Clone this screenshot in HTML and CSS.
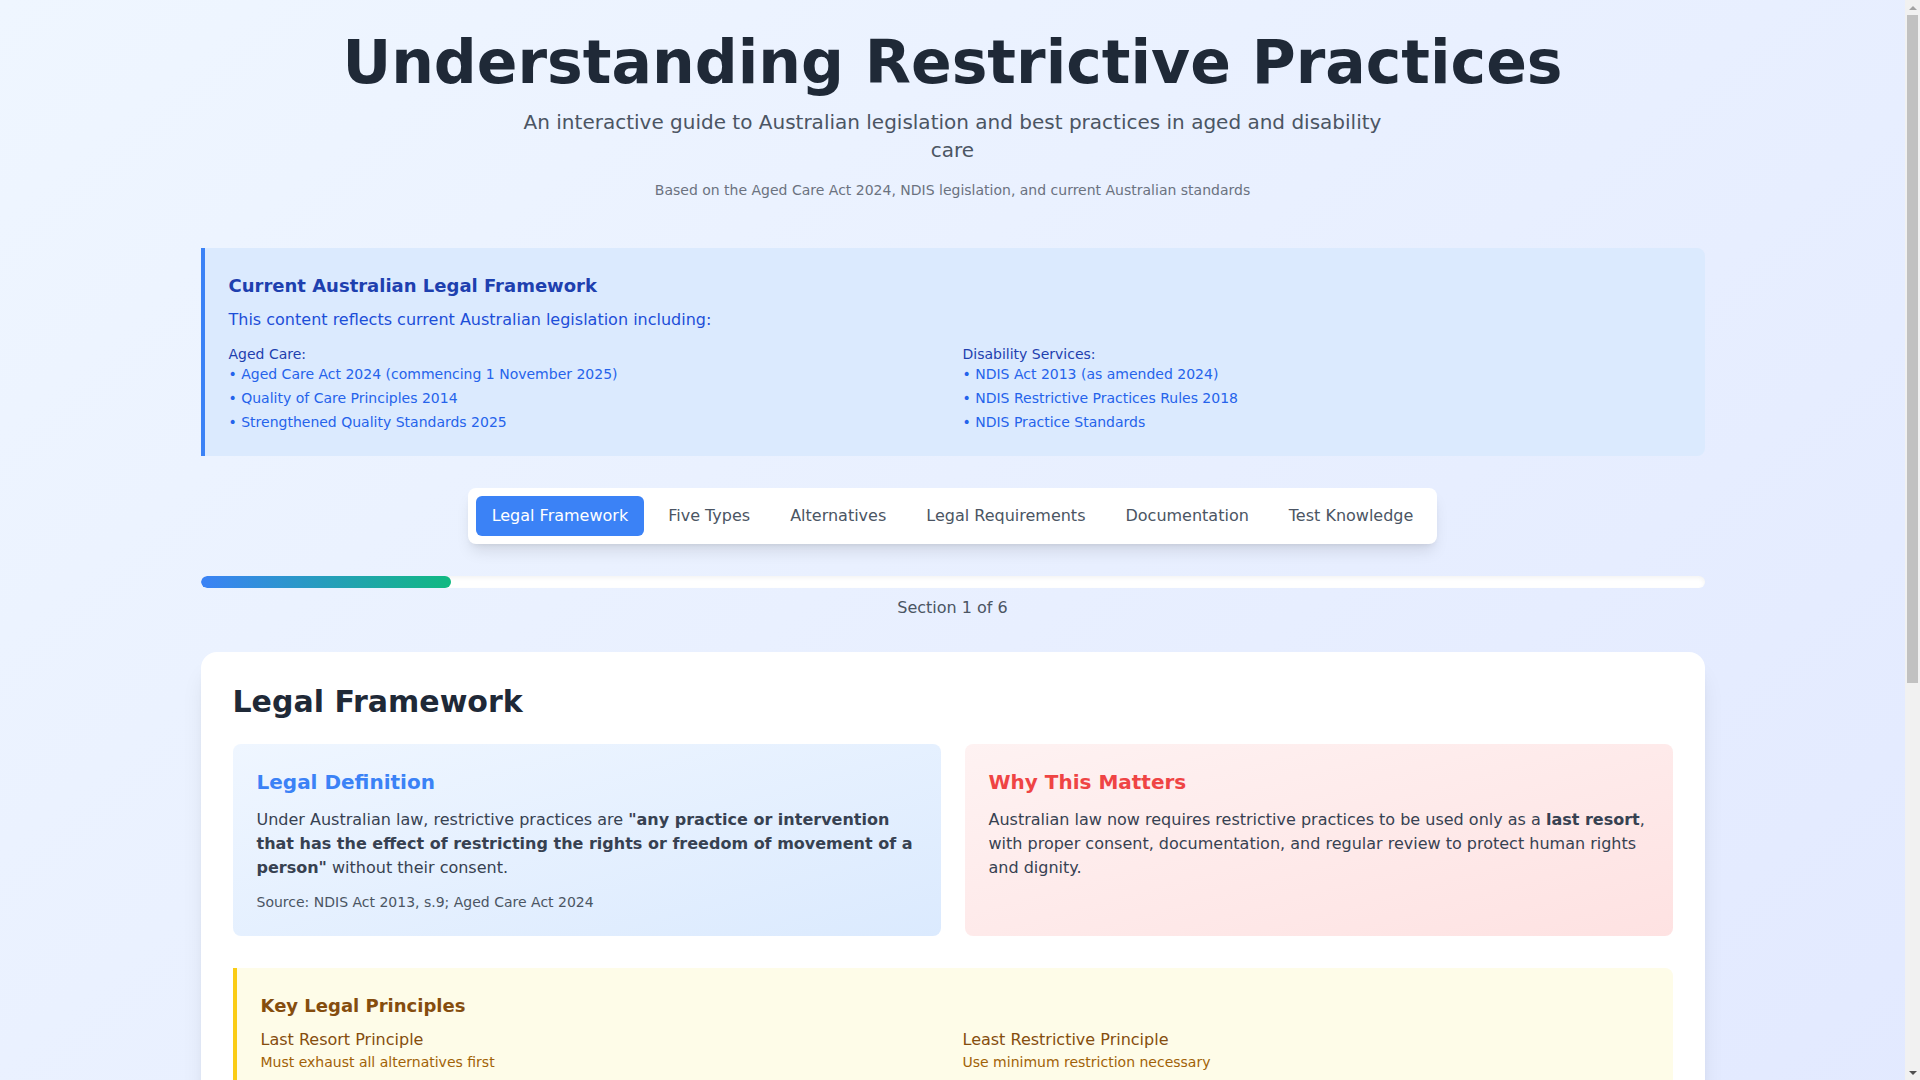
FILE: index.html
```html
<!DOCTYPE html>
<html lang="en">
<head>
<meta charset="utf-8">
<title>Understanding Restrictive Practices</title>
<link rel="stylesheet" href="styles.css">
</head>
<body>
<div class="page">
  <div class="container">
    <header class="header">
      <h1 class="title">Understanding Restrictive Practices</h1>
      <p class="subtitle">An interactive guide to Australian legislation and best practices in aged and disability care</p>
      <p class="based">Based on the Aged Care Act 2024, NDIS legislation, and current Australian standards</p>
    </header>

    <section class="info">
      <h2 class="info-title">Current Australian Legal Framework</h2>
      <p class="info-lead">This content reflects current Australian legislation including:</p>
      <div class="info-grid">
        <div>
          <div class="info-label">Aged Care:</div>
          <ul class="info-list">
            <li>• Aged Care Act 2024 (commencing 1 November 2025)</li>
            <li>• Quality of Care Principles 2014</li>
            <li>• Strengthened Quality Standards 2025</li>
          </ul>
        </div>
        <div>
          <div class="info-label">Disability Services:</div>
          <ul class="info-list">
            <li>• NDIS Act 2013 (as amended 2024)</li>
            <li>• NDIS Restrictive Practices Rules 2018</li>
            <li>• NDIS Practice Standards</li>
          </ul>
        </div>
      </div>
    </section>

    <div class="tabs-wrap">
      <nav class="tabs">
        <button class="tab active">Legal Framework</button>
        <button class="tab">Five Types</button>
        <button class="tab">Alternatives</button>
        <button class="tab">Legal Requirements</button>
        <button class="tab">Documentation</button>
        <button class="tab">Test Knowledge</button>
      </nav>
    </div>

    <div class="progress">
      <div class="progress-fill" style="width: 16.6667%"></div>
    </div>
    <p class="progress-text">Section 1 of 6</p>

    <main class="card">
      <h2 class="card-title">Legal Framework</h2>
      <div class="two-col">
        <div class="panel panel-blue">
          <h3 class="panel-title blue">Legal Definition</h3>
          <p class="panel-text">Under Australian law, restrictive practices are <strong>"any practice or intervention that has the effect of restricting the rights or freedom of movement of a person"</strong> without their consent.</p>
          <p class="panel-source">Source: NDIS Act 2013, s.9; Aged Care Act 2024</p>
        </div>
        <div class="panel panel-red">
          <h3 class="panel-title red">Why This Matters</h3>
          <p class="panel-text">Australian law now requires restrictive practices to be used only as a <strong>last resort</strong>, with proper consent, documentation, and regular review to protect human rights and dignity.</p>
        </div>
      </div>

      <section class="principles">
        <h3 class="principles-title">Key Legal Principles</h3>
        <div class="principles-grid">
          <div>
            <div class="pr-name">Last Resort Principle</div>
            <div class="pr-desc">Must exhaust all alternatives first</div>
          </div>
          <div>
            <div class="pr-name">Least Restrictive Principle</div>
            <div class="pr-desc">Use minimum restriction necessary</div>
          </div>
          <div>
            <div class="pr-name">Proportionality</div>
            <div class="pr-desc">Response must match the level of risk</div>
          </div>
          <div>
            <div class="pr-name">Time-Limited Use</div>
            <div class="pr-desc">Used for the shortest time possible</div>
          </div>
        </div>
      </section>

      <section class="bodies">
        <h3 class="bodies-title">Regulatory Bodies</h3>
        <div class="bodies-grid">
          <div class="body-item">
            <div class="body-name">Aged Care Quality and Safety Commission</div>
            <div class="body-desc">Regulates restrictive practices in residential and home aged care.</div>
          </div>
          <div class="body-item">
            <div class="body-name">NDIS Quality and Safeguards Commission</div>
            <div class="body-desc">Oversees authorisation, reporting and behaviour support plans.</div>
          </div>
        </div>
      </section>

      <div class="card-nav">
        <button class="btn btn-muted">Previous</button>
        <button class="btn btn-primary">Next</button>
      </div>
    </main>

    <footer class="footer">This guide is for educational purposes and does not constitute legal advice.</footer>
  </div>
</div>

<div class="scrollbar" aria-hidden="true">
  <div class="sb-arrow sb-up"><span class="tri-up"></span></div>
  <div class="sb-track"><div class="sb-thumb"></div></div>
  <div class="sb-arrow sb-down"><span class="tri-down"></span></div>
</div>
</body>
</html>
```

FILE: styles.css
```css
* { box-sizing: border-box; }

html, body {
  margin: 0;
  padding: 0;
}

html {
  scrollbar-width: none;
}

html::-webkit-scrollbar {
  display: none;
}

body {
  font-family: "DejaVu Sans", "Liberation Sans", sans-serif;
  color: #1f2937;
  background: #f1f1f1;
}

.page {
  min-height: 100vh;
  margin-right: 15px;
  background: linear-gradient(to bottom right, #eff6ff, #e0e7ff);
  padding: 32px 0 48px;
}

.container {
  max-width: 1536px;
  margin: 0 auto;
  padding: 0 16px;
}

.header {
  text-align: center;
  margin-bottom: 48px;
}

.title {
  margin: 0 0 16px;
  font-size: 60px;
  line-height: 60px;
  font-weight: 700;
  color: #1f2937;
}

.subtitle {
  max-width: 896px;
  margin: 0 auto 16px;
  font-size: 20px;
  line-height: 28px;
  color: #4b5563;
}

.based {
  margin: 0;
  font-size: 14px;
  line-height: 20px;
  color: #6b7280;
}

/* Info box */
.info {
  background: #dbeafe;
  border-left: 4px solid #3b82f6;
  border-radius: 0 8px 8px 0;
  padding: 24px;
  margin-bottom: 32px;
}

.info-title {
  margin: 0 0 8px;
  font-size: 18px;
  line-height: 28px;
  font-weight: 700;
  color: #1e40af;
}

.info-lead {
  margin: 0 0 12px;
  font-size: 16px;
  line-height: 24px;
  color: #1d4ed8;
}

.info-grid {
  display: grid;
  grid-template-columns: 1fr 1fr;
  gap: 16px;
  font-size: 14px;
  line-height: 20px;
}

.info-label {
  color: #1e40af;
}

.info-list {
  list-style: none;
  margin: 0;
  padding: 0;
  color: #2563eb;
  display: flex;
  flex-direction: column;
  gap: 4px;
}

/* Tabs */
.tabs-wrap {
  display: flex;
  justify-content: center;
  margin-bottom: 32px;
}

.tabs {
  display: flex;
  gap: 8px;
  padding: 8px;
  background: #ffffff;
  border-radius: 8px;
  box-shadow: 0 10px 15px -3px rgba(0,0,0,0.1), 0 4px 6px -4px rgba(0,0,0,0.1);
}

.tab {
  font-family: inherit;
  font-size: 16px;
  line-height: 24px;
  padding: 8px 16px;
  border: 0;
  border-radius: 6px;
  background: transparent;
  color: #4b5563;
  cursor: pointer;
}

.tab.active {
  background: #3b82f6;
  color: #ffffff;
}

/* Progress */
.progress {
  height: 12px;
  background: #ffffff;
  border-radius: 9999px;
  overflow: hidden;
  box-shadow: inset 0 2px 4px rgba(0,0,0,0.05);
}

.progress-fill {
  height: 100%;
  border-radius: 9999px;
  background: linear-gradient(to right, #3b82f6, #10b981);
}

.progress-text {
  margin: 8px 0 32px;
  text-align: center;
  font-size: 16px;
  line-height: 24px;
  color: #4b5563;
}

/* Main card */
.card {
  display: block;
  background: #ffffff;
  border-radius: 16px;
  padding: 32px;
  box-shadow: 0 20px 25px -5px rgba(0,0,0,0.1), 0 8px 10px -6px rgba(0,0,0,0.1);
}

.card-title {
  margin: 0 0 24px;
  font-size: 30px;
  line-height: 36px;
  font-weight: 700;
  color: #1f2937;
}

.two-col {
  display: grid;
  grid-template-columns: 1fr 1fr;
  gap: 24px;
  margin-bottom: 32px;
}

.panel {
  border-radius: 8px;
  padding: 24px;
}

.panel-blue {
  background: linear-gradient(to bottom right, #eff6ff, #dbeafe);
}

.panel-red {
  background: linear-gradient(to bottom right, #fef2f2, #fee2e2);
}

.panel-title {
  margin: 0 0 12px;
  font-size: 20px;
  line-height: 28px;
  font-weight: 700;
}

.panel-title.blue { color: #3b82f6; }
.panel-title.red { color: #ef4444; }

.panel-text {
  margin: 0;
  font-size: 16px;
  line-height: 24px;
  color: #374151;
}

.panel-text strong {
  color: #374151;
  font-weight: 700;
}

.panel-source {
  margin: 12px 0 0;
  font-size: 14px;
  line-height: 20px;
  color: #4b5563;
}

/* Principles */
.principles {
  background: #fefce8;
  border-left: 4px solid #facc15;
  border-radius: 0 8px 8px 0;
  padding: 24px;
  margin-bottom: 32px;
}

.principles-title {
  margin: 0 0 8px;
  font-size: 18px;
  line-height: 28px;
  font-weight: 700;
  color: #854d0e;
}

.principles-grid {
  display: grid;
  grid-template-columns: 1fr 1fr;
  gap: 16px;
}

.pr-name {
  font-size: 16px;
  line-height: 24px;
  color: #854d0e;
}

.pr-desc {
  font-size: 14px;
  line-height: 20px;
  color: #a16207;
}

/* Regulatory bodies */
.bodies {
  background: #f9fafb;
  border-radius: 8px;
  padding: 24px;
}

.bodies-title {
  margin: 0 0 12px;
  font-size: 18px;
  line-height: 28px;
  font-weight: 700;
  color: #1f2937;
}

.bodies-grid {
  display: grid;
  grid-template-columns: 1fr 1fr;
  gap: 16px;
}

.body-item {
  background: #ffffff;
  border: 1px solid #e5e7eb;
  border-radius: 8px;
  padding: 16px;
}

.body-name {
  font-size: 16px;
  line-height: 24px;
  font-weight: 700;
  color: #374151;
  margin-bottom: 4px;
}

.body-desc {
  font-size: 14px;
  line-height: 20px;
  color: #4b5563;
}

.card-nav {
  display: flex;
  justify-content: space-between;
  margin-top: 32px;
  padding-top: 24px;
  border-top: 1px solid #e5e7eb;
}

.btn {
  font-family: inherit;
  font-size: 16px;
  line-height: 24px;
  padding: 10px 24px;
  border: 0;
  border-radius: 8px;
  cursor: pointer;
}

.btn-muted {
  background: #e5e7eb;
  color: #9ca3af;
}

.btn-primary {
  background: #3b82f6;
  color: #ffffff;
}

.footer {
  margin-top: 32px;
  text-align: center;
  font-size: 14px;
  line-height: 20px;
  color: #6b7280;
}

/* Imitation of the browser's vertical scrollbar (overlays the window edge) */
.scrollbar {
  position: fixed;
  top: 0;
  right: 0;
  width: 15px;
  height: 100vh;
  background: #f1f1f1;
  display: flex;
  flex-direction: column;
}

.sb-arrow {
  height: 15px;
  flex: 0 0 15px;
  display: flex;
  align-items: center;
  justify-content: center;
}

.sb-track {
  flex: 1;
  padding: 0 2px;
}

.sb-thumb {
  height: 668px;
  background: #c1c1c1;
}

.tri-up {
  width: 0;
  height: 0;
  border-left: 4px solid transparent;
  border-right: 4px solid transparent;
  border-bottom: 4px solid #a3a3a3;
}

.tri-down {
  width: 0;
  height: 0;
  border-left: 4px solid transparent;
  border-right: 4px solid transparent;
  border-top: 4px solid #505050;
}
```
